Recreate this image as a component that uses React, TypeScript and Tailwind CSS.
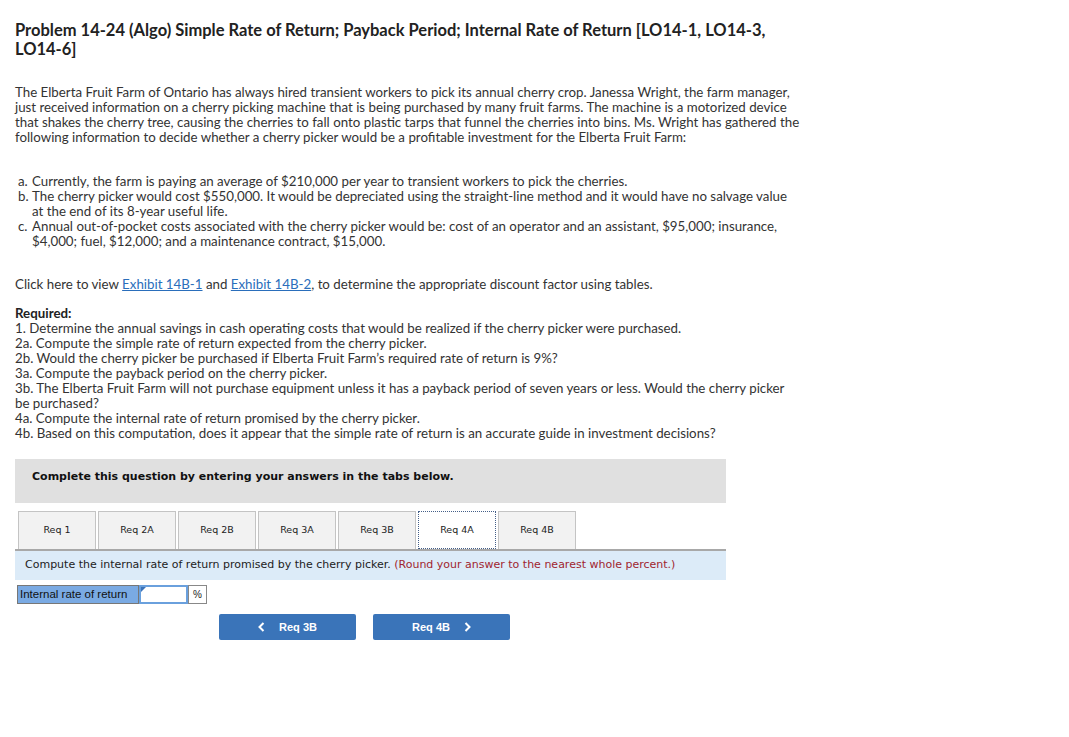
import React from 'react';

const tabs = ['Req 1', 'Req 2A', 'Req 2B', 'Req 3A', 'Req 3B', 'Req 4A', 'Req 4B'];

const required = [
  '1. Determine the annual savings in cash operating costs that would be realized if the cherry picker were purchased.',
  '2a. Compute the simple rate of return expected from the cherry picker.',
  "2b. Would the cherry picker be purchased if Elberta Fruit Farm’s required rate of return is 9%?",
  '3a. Compute the payback period on the cherry picker.',
  '3b. The Elberta Fruit Farm will not purchase equipment unless it has a payback period of seven years or less. Would the cherry picker be purchased?',
  '4a. Compute the internal rate of return promised by the cherry picker.',
  '4b. Based on this computation, does it appear that the simple rate of return is an accurate guide in investment decisions?',
];

export default function App() {
  return (
    <div className="min-h-[737px] bg-white text-[#333] pl-[15px] pt-[21px]" style={{ fontFamily: 'Lato, "Liberation Sans", sans-serif' }}>
      <div className="w-[790px]">
        <h1 className="text-[16.5px] font-bold leading-[19px] text-[#222]">
          Problem 14-24 (Algo) Simple Rate of Return; Payback Period; Internal Rate of Return [LO14-1, LO14-3,{' '}
          <span className="whitespace-nowrap">LO14-6]</span>
        </h1>

        <p className="mt-[26px] text-[13.3px] leading-[15px]">
          The Elberta Fruit Farm of Ontario has always hired transient workers to pick its annual cherry crop. Janessa Wright, the farm manager,
          just received information on a cherry picking machine that is being purchased by many fruit farms. The machine is a motorized device
          that shakes the cherry tree, causing the cherries to fall onto plastic tarps that funnel the cherries into bins. Ms. Wright has gathered the
          following information to decide whether a cherry picker would be a profitable investment for the Elberta Fruit Farm:
        </p>

        <ul className="w-[782px] mt-[29px] text-[13.3px] leading-[15px] pl-[3px]">
          <li className="flex">
            <span className="w-[14px] shrink-0">a.</span>
            <span>Currently, the farm is paying an average of $210,000 per year to transient workers to pick the cherries.</span>
          </li>
          <li className="flex">
            <span className="w-[14px] shrink-0">b.</span>
            <span>The cherry picker would cost $550,000. It would be depreciated using the straight-line method and it would have no salvage value at the end of its 8-year useful life.</span>
          </li>
          <li className="flex">
            <span className="w-[14px] shrink-0">c.</span>
            <span>Annual out-of-pocket costs associated with the cherry picker would be: cost of an operator and an assistant, $95,000; insurance, $4,000; fuel, $12,000; and a maintenance contract, $15,000.</span>
          </li>
        </ul>

        <p className="mt-[28px] text-[13.3px] leading-[15px]">
          Click here to view <a className="text-[#2a6ebb] underline">Exhibit 14B-1</a> and{' '}
          <a className="text-[#2a6ebb] underline">Exhibit 14B-2</a>, to determine the appropriate discount factor using tables.
        </p>

        <p className="mt-[14px] text-[13.3px] leading-[15px] font-bold text-[#222]">Required:</p>
        <div className="w-[782px] text-[13.3px] leading-[15px]">
          {required.map((r) => (
            <p key={r}>{r}</p>
          ))}
        </div>
      </div>

      <div className="w-[711px] mt-[18px]" style={{ fontFamily: '"DejaVu Sans", Verdana, sans-serif' }}>
        <div className="bg-[#e0e0e0] h-[44px] pl-[17px] pt-[10px] text-[11px] font-bold text-[#111]">
          Complete this question by entering your answers in the tabs below.
        </div>

        <div className="flex gap-[2px] pl-[3px] mt-[8px] border-b-2 border-[#a8a8a8]">
          {tabs.map((t) => {
            const active = t === 'Req 4A';
            return (
              <div
                key={t}
                className={
                  active
                    ? 'w-[78px] h-[38px] -mb-[2px] bg-white border border-dotted border-[#445f88] flex items-center justify-center text-[9.5px] text-[#222]'
                    : 'w-[78px] h-[38px] bg-[#f2f2f2] border border-b-0 border-[#c4c4c4] flex items-center justify-center text-[9.5px] text-[#222]'
                }
              >
                {t}
              </div>
            );
          })}
        </div>

        <div className="bg-[#dcebf8] h-[29px] pl-[10px] flex items-center text-[11px] text-[#222]">
          Compute the internal rate of return promised by the cherry picker.&nbsp;
          <span className="text-[#a0252f]">(Round your answer to the nearest whole percent.)</span>
        </div>

        <div className="flex mt-[5px] pl-[2px] h-[19px]" style={{ fontFamily: '"Liberation Sans", Arial, sans-serif' }}>
          <div className="w-[122px] bg-[#7aaae3] border border-[#777] text-[11.5px] text-[#111] flex items-center pl-[2px]">
            Internal rate of return
          </div>
          <div className="relative w-[49px] bg-white border-2 border-[#6aa0dd]">
            <div className="absolute left-0 top-0 w-0 h-0 border-t-[5px] border-r-[5px] border-t-[#3b73b9] border-r-transparent" />
          </div>
          <div className="w-[19px] border border-[#888] text-[10px] text-[#222] flex items-center justify-center">%</div>
        </div>

        <div className="flex gap-[17px] pl-[204px] mt-[10px]">
          <button className="w-[137px] h-[26px] bg-[#3a74b9] rounded-[2px] text-white text-[11px] font-bold flex items-center justify-center gap-[14px]" style={{ fontFamily: '"Liberation Sans", Arial, sans-serif' }}>
            <svg width="7" height="10" viewBox="0 0 7 10"><path d="M5.5 1 L1.5 5 L5.5 9" stroke="white" strokeWidth="2" fill="none" /></svg>
            <span>Req 3B</span>
          </button>
          <button className="w-[137px] h-[26px] bg-[#3a74b9] rounded-[2px] text-white text-[11px] font-bold flex items-center justify-center gap-[14px]" style={{ fontFamily: '"Liberation Sans", Arial, sans-serif' }}>
            <span>Req 4B</span>
            <svg width="7" height="10" viewBox="0 0 7 10"><path d="M1.5 1 L5.5 5 L1.5 9" stroke="white" strokeWidth="2" fill="none" /></svg>
          </button>
        </div>
      </div>
    </div>
  );
}
